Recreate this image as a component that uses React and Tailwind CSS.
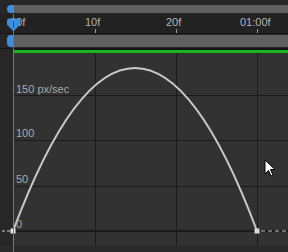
import React from 'react';

const FONT = { fontFamily: '"Liberation Sans", Arial, sans-serif' };

function Cursor() {
  return (
    <svg width="13" height="19" viewBox="0 0 13 19" className="absolute left-[264px] top-[159px]">
      <path d="M1 1 L1 15 L4.5 11.5 L7 17 L9 16 L6.5 10.5 L11 10.5 Z" fill="#fff" stroke="#000" strokeWidth="1" strokeLinejoin="round" />
    </svg>
  );
}

function Playhead() {
  return (
    <div className="absolute left-0 top-[14px] bottom-0 w-[22px] pointer-events-none">
      <div className="absolute left-[13px] top-0 bottom-0 w-px bg-[#2f86d8]" />
      <svg width="22" height="16" viewBox="0 0 22 16" className="absolute left-0 top-[4px]">
        <path d="M7 2.5 Q7 0.5 9 0.5 L18 0.5 Q20 0.5 20 2.5 L20 6.5 L13.5 13.5 L7 6.5 Z" fill="#3d8fe0" />
        <line x1="13.5" y1="3" x2="13.5" y2="10" stroke="#1f5f9e" strokeWidth="1" />
      </svg>
    </div>
  );
}

function Graph() {
  const hLines = [42, 87, 133];
  const vLines = [95, 176, 257];
  return (
    <svg width="288" height="199" viewBox="0 0 288 199" className="block">
      <rect x="0" y="0" width="288" height="199" fill="#323232" />
      <rect x="0" y="0" width="13" height="199" fill="#272727" />
      {hLines.map((y) => (
        <line key={y} x1="13" y1={y + 0.5} x2="288" y2={y + 0.5} stroke="#1b1b1b" strokeWidth="1" />
      ))}
      {vLines.map((x) => (
        <line key={x} x1={x + 0.5} y1="0" x2={x + 0.5} y2="193" stroke="#1b1b1b" strokeWidth="1" />
      ))}
      <line x1="13" y1="178" x2="288" y2="178" stroke="#1a1a1a" strokeWidth="2" />
      <rect x="0" y="193" width="288" height="6" fill="#2a2a2a" />
      <line x1="2" y1="178" x2="10" y2="178" stroke="#9a9a9a" strokeWidth="1.5" strokeDasharray="3 2" />
      <line x1="261" y1="178" x2="288" y2="178" stroke="#8a8a8a" strokeWidth="1.5" strokeDasharray="4 3" />
      <path d="M13 178 Q135 -148 257 178" fill="none" stroke="#c9c9c9" strokeWidth="2" />
      <rect x="10.5" y="175.5" width="5" height="5" fill="#e6e6e6" />
      <rect x="254.5" y="175.5" width="5" height="5" fill="#d8d8d8" />
      <g fill="#a9a9a9" fontSize="11" style={FONT}>
        <text x="16" y="40">150 px/sec</text>
        <text x="16" y="84">100</text>
        <text x="16" y="130">50</text>
        <text x="16" y="175">0</text>
      </g>
    </svg>
  );
}

export default function App() {
  const ticks = [
    { label: '00f', left: 10, tick: null },
    { label: '10f', left: 85, tick: 95 },
    { label: '20f', left: 166, tick: 176 },
    { label: '01:00f', left: 240, tick: 257 },
  ];
  return (
    <div className="relative w-[288px] h-[252px] overflow-hidden bg-[#262626] flex flex-col" style={FONT}>
      <div className="h-[14px] flex pt-[5px] pb-px pl-[7px]">
        <div className="w-[7px] rounded-l-[4px] bg-[#3d8fe0]" />
        <div className="flex-1 bg-[#606060]" />
      </div>
      <div className="relative h-[19px] bg-[#222222] text-[11px] leading-none text-[#b4b4b4]">
        {ticks.map((t) => (
          <React.Fragment key={t.label}>
            <span className="absolute top-[3px]" style={{ left: t.left }}>{t.label}</span>
            {t.tick && <span className="absolute top-[15px] w-px h-[4px] bg-[#9a9a9a]" style={{ left: t.tick }} />}
          </React.Fragment>
        ))}
      </div>
      <div className="h-[16px] flex border-y border-[#141414] bg-[#262626] pl-[7px] py-px">
        <div className="w-[7px] rounded-l-[4px] bg-[#3d8fe0]" />
        <div className="flex-1 bg-[#5f5f5f]" />
      </div>
      <div className="h-[4px] flex">
        <div className="w-[13px]" />
        <div className="flex-1 border-t border-[#111] bg-[#20b420]" />
      </div>
      <Graph />
      <Playhead />
      <Cursor />
    </div>
  );
}
